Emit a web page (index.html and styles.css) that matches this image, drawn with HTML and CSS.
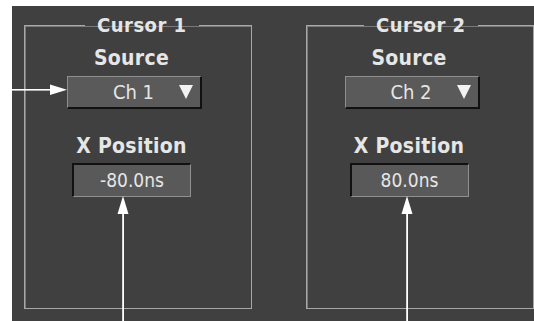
FILE: index.html
```html
<!DOCTYPE html>
<html>
<head>
<meta charset="utf-8">
<link rel="stylesheet" href="styles.css">
</head>
<body>
<div class="panel">
  <fieldset class="group g1">
    <legend class="title">Cursor 1</legend>
    <div class="label first">Source</div>
    <div class="dropdown"><span class="dd-text">Ch 1</span><span class="tri"></span></div>
    <div class="label second">X Position</div>
    <div class="value">-80.0ns</div>
  </fieldset>
  <fieldset class="group g2">
    <legend class="title">Cursor 2</legend>
    <div class="label first">Source</div>
    <div class="dropdown"><span class="dd-text">Ch 2</span><span class="tri"></span></div>
    <div class="label second">X Position</div>
    <div class="value">80.0ns</div>
  </fieldset>
</div>
<svg class="callouts" width="534" height="321" viewBox="0 0 534 321">
  <g fill="#ffffff" stroke="none">
    <rect x="0" y="89" width="52" height="1.6"/>
    <polygon points="67,89.8 50,84.5 50,95"/>
    <rect x="122.2" y="210" width="1.8" height="111"/>
    <polygon points="123,196 117.5,214 128.5,214"/>
    <rect x="406.2" y="210" width="1.8" height="111"/>
    <polygon points="407,196 401.5,214 412.5,214"/>
  </g>
</svg>
</body>
</html>
```
FILE: styles.css
```css
html, body {
  margin: 0;
  padding: 0;
  background: #ffffff;
  overflow: hidden;
  width: 534px;
  height: 321px;
}
body {
  position: relative;
  font-family: "DejaVu Sans Condensed", "DejaVu Sans", sans-serif;
  color: #e6e6e6;
}
.panel {
  margin: 6px 0 0 12px;
  height: 315px;
  background: #404040;
  display: flex;
  gap: 54px;
  padding: 7px 0 0 12px;
  box-sizing: border-box;
}
.group {
  margin: 0;
  width: 228px;
  height: 296px;
  box-sizing: border-box;
  border: 1px solid #a8a8a8;
  box-shadow: inset 1px 1px 0 #7a7a7a;
  padding: 0 13px 0 0;
  display: flex;
  flex-direction: column;
  align-items: center;
  min-width: 0;
}
.g2 { padding-right: 22px; }
.title {
  margin: 0;
  padding: 0 12px;
  font-weight: bold;
  font-size: 20px;
  line-height: 24px;
  letter-spacing: 0.5px;
}
.g1 .title { margin-left: 60px; }
.g2 .title { margin-left: 57px; }
.label {
  font-weight: bold;
  font-size: 21px;
  line-height: 24px;
  letter-spacing: 0.3px;
}
.label.first { margin-top: 9px; }
.label.second { margin-top: 25px; }
.dropdown {
  margin-top: 6px;
  margin-left: 6px;
  width: 135px;
  height: 33px;
  box-sizing: border-box;
  background: #5a5a5a;
  border-top: 1px solid #8e8e8e;
  border-left: 1px solid #8e8e8e;
  border-right: 2px solid #111111;
  border-bottom: 2px solid #111111;
  display: flex;
  align-items: center;
  padding: 0 7px 0 0;
}
.dd-text {
  flex: 1;
  text-align: center;
  font-size: 20px;
  padding-left: 20px;
  line-height: 24px;
}
.tri {
  width: 0;
  height: 0;
  border-left: 7px solid transparent;
  border-right: 7px solid transparent;
  border-top: 14px solid #f2f2f2;
}
.value {
  margin-top: 5px;
  width: 119px;
  height: 34px;
  box-sizing: border-box;
  background: #595959;
  border-top: 2px solid #111111;
  border-left: 2px solid #111111;
  border-right: 1px solid #909090;
  border-bottom: 1px solid #909090;
  font-size: 19px;
  line-height: 30px;
  text-align: center;
}
.callouts {
  position: absolute;
  left: 0;
  top: 0;
}
```
